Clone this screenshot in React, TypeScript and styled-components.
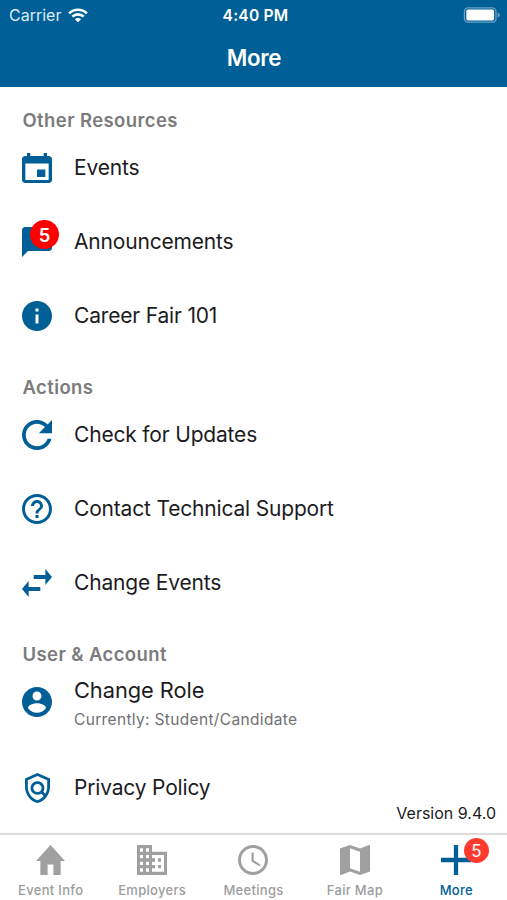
import React from "react";
import styled, { createGlobalStyle } from "styled-components";

const BLUE = "#005f96";

const GlobalStyle = createGlobalStyle`
  * { box-sizing: border-box; }
  body { margin: 0; background: #fff; font-family: Inter, "Liberation Sans", sans-serif; }
`;

const Screen = styled.div`
  width: 507px;
  height: 900px;
  display: flex;
  flex-direction: column;
  overflow: hidden;
  background: #fff;
`;

const Header = styled.header`
  flex: none;
  height: 87px;
  background: ${BLUE};
  color: #fff;
`;

const StatusBar = styled.div`
  display: grid;
  grid-template-columns: 1fr auto 1fr;
  align-items: center;
  height: 30px;
  padding: 0 7px 0 9px;
`;

const Carrier = styled.div`
  display: flex;
  align-items: center;
  gap: 7px;
  font-size: 16px;
  letter-spacing: 0;
  color: #dcecf6;
`;

const Clock = styled.div`
  padding-left: 2px;
  font-size: 15.6px;
  font-weight: 600;
  letter-spacing: 0.2px;
`;

const BatterySlot = styled.div`
  display: flex;
  justify-content: flex-end;
`;

const Title = styled.h1`
  margin: 0;
  padding: 13px 0 0 1px;
  text-align: center;
  font-size: 22.3px;
  line-height: 30px;
  font-weight: 600;
  letter-spacing: -0.3px;
`;

const Content = styled.main`
  position: relative;
  flex: 1;
  min-height: 0;
`;

const SectionTitle = styled.h2<{ $first?: boolean }>`
  margin: 0;
  height: ${(p) => (p.$first ? 44 : 45)}px;
  padding: ${(p) => (p.$first ? 21 : 22)}px 0 0 22.5px;
  font-size: 18.5px;
  line-height: 24px;
  font-weight: 600;
  letter-spacing: 0.4px;
  color: #7b7b7d;
`;

const Row = styled.div<{ $tall?: boolean }>`
  display: flex;
  align-items: center;
  height: ${(p) => (p.$tall ? 86 : 74)}px;
  padding: 0 22px;
  padding-bottom: ${(p) => (p.$tall ? 12 : 0)}px;
`;

const IconSlot = styled.div`
  position: relative;
  display: flex;
  justify-content: center;
  width: 30px;
  margin-right: 22px;
  color: ${BLUE};
`;

const RowText = styled.div<{ $large?: boolean }>`
  font-size: ${(p) => (p.$large ? 21.8 : 21)}px;
  line-height: 28px;
  color: #1c1c1e;
  letter-spacing: ${(p) => (p.$large ? -0.05 : -0.18)}px;
`;

const RowDetail = styled.div`
  margin-top: 3px;
  font-size: 15.5px;
  line-height: 26px;
  color: #707072;
  letter-spacing: 0.34px;
`;

const RowBody = styled.div<{ $tall?: boolean }>`
  padding-top: ${(p) => (p.$tall ? 5 : 0)}px;
`;

const Badge = styled.span<{ $tab?: boolean }>`
  position: absolute;
  left: ${(p) => (p.$tab ? 22.5 : 8)}px;
  top: -7px;
  width: ${(p) => (p.$tab ? 25 : 29)}px;
  height: ${(p) => (p.$tab ? 25 : 29)}px;
  border-radius: 50%;
  display: flex;
  align-items: center;
  justify-content: center;
  color: #fff;
  background: ${(p) => (p.$tab ? "#ff3b30" : "#ff0000")};
  font-size: ${(p) => (p.$tab ? 17 : 18.5)}px;
  font-weight: ${(p) => (p.$tab ? 400 : 600)};
`;

const Version = styled.div`
  position: absolute;
  right: 11px;
  bottom: 9px;
  font-size: 16px;
  line-height: 22px;
  color: #1c1c1e;
`;

const TabBar = styled.nav`
  flex: none;
  display: grid;
  grid-template-columns: repeat(5, 1fr);
  height: 67px;
  border-top: 2px solid #dcdcdc;
`;

const Tab = styled.div<{ $active?: boolean }>`
  display: flex;
  flex-direction: column;
  align-items: center;
  padding-top: 10px;
  color: ${(p) => (p.$active ? BLUE : "#9c9c9c")};
`;

const TabIcon = styled.div<{ $active?: boolean }>`
  position: relative;
  display: flex;
  justify-content: center;
  width: 30px;
  color: ${(p) => (p.$active ? BLUE : "#a0a0a0")};
`;

const TabLabel = styled.div`
  margin-top: 6px;
  font-size: 13px;
  line-height: 18px;
  font-weight: 500;
  letter-spacing: 0.3px;
  white-space: nowrap;
`;

interface Glyph {
  box: string;
  d: string;
  w?: number;
  h?: number;
}

const glyphs: Record<string, Glyph> = {
  event: {
    box: "3 1 18 20",
    d: "M17 12h-5v5h5v-5zM16 1v2H8V1H6v2H5c-1.11 0-1.99.9-1.99 2L3 19c0 1.1.89 2 2 2h14c1.1 0 2-.9 2-2V5c0-1.1-.9-2-2-2h-1V1h-2zm3 18H5V8h14v11z",
  },
  chat: {
    box: "2 2 20 20",
    d: "M20 2H4c-1.1 0-2 .9-2 2v18l4-4h14c1.1 0 2-.9 2-2V4c0-1.1-.9-2-2-2z",
  },
  info: {
    box: "2 2 20 20",
    d: "M12 2C6.48 2 2 6.48 2 12s4.48 10 10 10 10-4.48 10-10S17.52 2 12 2zm1 15h-2v-6h2v6zm0-8h-2V7h2v2z",
  },
  refresh: {
    box: "4 4 16 16",
    d: "M17.65 6.35C16.2 4.9 14.21 4 12 4c-4.42 0-7.99 3.58-7.99 8s3.57 8 7.99 8c3.73 0 6.84-2.55 7.73-6h-2.08c-.82 2.33-3.04 4-5.65 4-3.31 0-6-2.69-6-6s2.69-6 6-6c1.66 0 3.14.69 4.22 1.78L13 11h7V4l-2.35 2.35z",
  },
  help: {
    box: "2 2 20 20",
    d: "M11 18h2v-2h-2v2zm1-16C6.48 2 2 6.48 2 12s4.48 10 10 10 10-4.48 10-10S17.52 2 12 2zm0 18c-4.41 0-8-3.59-8-8s3.59-8 8-8 8 3.59 8 8-3.59 8-8 8zm0-14c-2.21 0-4 1.79-4 4h2c0-1.1.9-2 2-2s2 .9 2 2c0 2-3 1.75-3 5h2c0-2.25 3-2.5 3-5 0-2.21-1.79-4-4-4z",
  },
  swap: {
    box: "3 5 18 14",
    h: 28,
    d: "M6.99 11L3 15l3.99 4v-3H14v-2H6.99v-3zM21 9l-3.99-4v3H10v2h7.01v3L21 9z",
  },
  account: {
    box: "2 2 20 20",
    d: "M12 2C6.48 2 2 6.48 2 12s4.48 10 10 10 10-4.48 10-10S17.52 2 12 2zm0 3c1.66 0 3 1.34 3 3s-1.34 3-3 3-3-1.34-3-3 1.34-3 3-3zm0 14.2c-2.5 0-4.71-1.28-6-3.22.03-1.99 4-3.08 6-3.08 1.99 0 5.97 1.09 6 3.08-1.29 1.94-3.5 3.22-6 3.22z",
  },
  policy: {
    box: "3 1 18 22",
    w: 25,
    d: "M12 1L3 5v6c0 5.55 3.84 10.74 9 12 5.16-1.26 9-6.45 9-12V5l-9-4zm7 10c0 1.85-.51 3.65-1.38 5.21l-1.45-1.45c1.29-1.94 1.07-4.58-.64-6.29-1.95-1.95-5.12-1.95-7.07 0-1.95 1.95-1.95 5.12 0 7.07 1.71 1.71 4.35 1.92 6.29.64l1.72 1.72c-1.19 1.42-2.73 2.51-4.47 3.04-4.02-1.25-7-5.42-7-9.94V6.3l7-3.11 7 3.11V11zm-7 4c-1.66 0-3-1.34-3-3s1.34-3 3-3 3 1.34 3 3-1.34 3-3 3z",
  },
  home: { box: "2 3 20 17", w: 29, d: "M10 20v-6h4v6h5v-8h3L12 3 2 12h3v8z" },
  business: {
    box: "2 3 20 18",
    d: "M12 7V3H2v18h20V7H12zM6 19H4v-2h2v2zm0-4H4v-2h2v2zm0-4H4V9h2v2zm0-4H4V5h2v2zm4 12H8v-2h2v2zm0-4H8v-2h2v2zm0-4H8V9h2v2zm0-4H8V5h2v2zm10 12h-8v-2h2v-2h-2v-2h2v-2h-2V9h8v10zm-2-8h-2v2h2v-2zm0 4h-2v2h2v-2z",
  },
  schedule: {
    box: "2 2 20 20",
    d: "M11.99 2C6.47 2 2 6.48 2 12s4.47 10 9.99 10C17.52 22 22 17.52 22 12S17.52 2 11.99 2zM12 20c-4.42 0-8-3.58-8-8s3.58-8 8-8 8 3.58 8 8-3.58 8-8 8zm.5-13H11v6l5.25 3.15.75-1.23-4.5-2.67z",
  },
  map: {
    box: "3 3 18 18",
    d: "M20.5 3l-.16.03L15 5.1 9 3 3.36 4.9c-.21.07-.36.25-.36.48V20.5c0 .28.22.5.5.5l.16-.03L9 18.9l6 2.1 5.64-1.9c.21-.07.36-.25.36-.48V3.5c0-.28-.22-.5-.5-.5zM15 19l-6-2.11V5l6 2.11V19z",
  },
  add: { box: "5 5 14 14", d: "M19 13h-6v6h-2v-6H5v-2h6V5h2v6h6v2z" },
};

const Icon = ({ name }: { name: string }) => {
  const { box, d, w = 30, h = 30 } = glyphs[name];
  return (
    <svg width={w} height={h} viewBox={box} preserveAspectRatio="none" fill="currentColor">
      <path d={d} />
    </svg>
  );
};

const Wifi = () => (
  <svg width="20" height="15" viewBox="0 0 20 15" fill="none" stroke="#fff" strokeWidth="2.6">
    <path d="M1.1 5.4a12.7 12.7 0 0 1 17.8 0" />
    <path d="M4.3 8.7a8.1 8.1 0 0 1 11.4 0" />
    <path d="M10 14.2 6.9 11.2a4.4 4.4 0 0 1 6.2 0z" fill="#fff" stroke="none" />
  </svg>
);

const Battery = () => (
  <svg width="37" height="16" viewBox="0 0 37 16">
    <rect x="1.4" y="0.9" width="31.6" height="14.2" rx="3.6" fill="none" stroke="#6ba3c6" strokeWidth="1.3" />
    <rect x="3.3" y="2.6" width="27.8" height="10.8" rx="1.6" fill="#fff" />
    <path d="M34.6 5.5c1.5.5 2.2 1.4 2.2 2.5s-.7 2-2.2 2.5z" fill="#6ba3c6" />
  </svg>
);

interface Item {
  icon: string;
  label: string;
  detail?: string;
  badge?: number;
}

const sections: { title: string; items: Item[] }[] = [
  {
    title: "Other Resources",
    items: [
      { icon: "event", label: "Events" },
      { icon: "chat", label: "Announcements", badge: 5 },
      { icon: "info", label: "Career Fair 101" },
    ],
  },
  {
    title: "Actions",
    items: [
      { icon: "refresh", label: "Check for Updates" },
      { icon: "help", label: "Contact Technical Support" },
      { icon: "swap", label: "Change Events" },
    ],
  },
  {
    title: "User & Account",
    items: [
      { icon: "account", label: "Change Role", detail: "Currently: Student/Candidate" },
      { icon: "policy", label: "Privacy Policy" },
    ],
  },
];

const tabs = [
  { icon: "home", label: "Event Info" },
  { icon: "business", label: "Employers" },
  { icon: "schedule", label: "Meetings" },
  { icon: "map", label: "Fair Map" },
  { icon: "add", label: "More", active: true, badge: 5 },
];

export default function App() {
  return (
    <Screen>
      <GlobalStyle />
      <Header>
        <StatusBar>
          <Carrier>
            Carrier <Wifi />
          </Carrier>
          <Clock>4:40 PM</Clock>
          <BatterySlot>
            <Battery />
          </BatterySlot>
        </StatusBar>
        <Title>More</Title>
      </Header>
      <Content>
        {sections.map((section, i) => (
          <section key={section.title}>
            <SectionTitle $first={i === 0}>{section.title}</SectionTitle>
            {section.items.map((item) => (
              <Row key={item.label} $tall={!!item.detail}>
                <IconSlot>
                  <Icon name={item.icon} />
                  {item.badge && <Badge>{item.badge}</Badge>}
                </IconSlot>
                <RowBody $tall={!!item.detail}>
                  <RowText $large={!!item.detail}>{item.label}</RowText>
                  {item.detail && <RowDetail>{item.detail}</RowDetail>}
                </RowBody>
              </Row>
            ))}
          </section>
        ))}
        <Version>Version 9.4.0</Version>
      </Content>
      <TabBar>
        {tabs.map((tab) => (
          <Tab key={tab.label} $active={tab.active}>
            <TabIcon $active={tab.active}>
              <Icon name={tab.icon} />
              {tab.badge && <Badge $tab>{tab.badge}</Badge>}
            </TabIcon>
            <TabLabel>{tab.label}</TabLabel>
          </Tab>
        ))}
      </TabBar>
    </Screen>
  );
}
